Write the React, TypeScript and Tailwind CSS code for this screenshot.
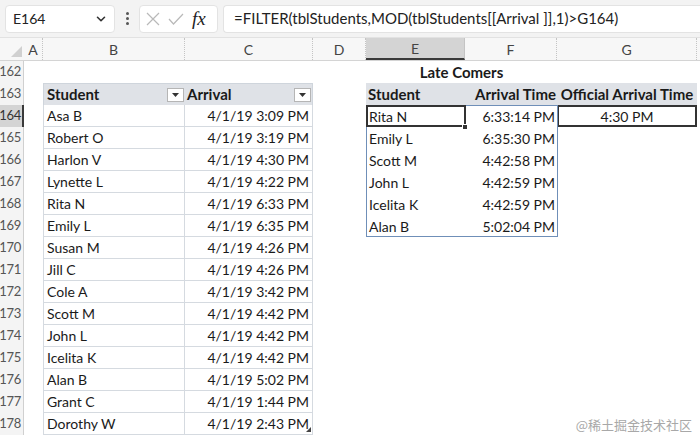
import React from "react";
import { ChevronDown } from "lucide-react";

const COLS = [
  { k: "A", w: 19 },
  { k: "B", w: 142 },
  { k: "C", w: 128 },
  { k: "D", w: 53 },
  { k: "E", w: 99 },
  { k: "F", w: 92 },
  { k: "G", w: 140 },
];

const students: [string, string][] = [
  ["Asa B", "4/1/19 3:09 PM"],
  ["Robert O", "4/1/19 3:19 PM"],
  ["Harlon V", "4/1/19 4:30 PM"],
  ["Lynette L", "4/1/19 4:22 PM"],
  ["Rita N", "4/1/19 6:33 PM"],
  ["Emily L", "4/1/19 6:35 PM"],
  ["Susan M", "4/1/19 4:26 PM"],
  ["Jill C", "4/1/19 4:26 PM"],
  ["Cole A", "4/1/19 3:42 PM"],
  ["Scott M", "4/1/19 4:42 PM"],
  ["John L", "4/1/19 4:42 PM"],
  ["Icelita K", "4/1/19 4:42 PM"],
  ["Alan B", "4/1/19 5:02 PM"],
  ["Grant C", "4/1/19 1:44 PM"],
  ["Dorothy W", "4/1/19 2:43 PM"],
];

const late: [string, string][] = [
  ["Rita N", "6:33:14 PM"],
  ["Emily L", "6:35:30 PM"],
  ["Scott M", "4:42:58 PM"],
  ["John L", "4:42:59 PM"],
  ["Icelita K", "4:42:59 PM"],
  ["Alan B", "5:02:04 PM"],
];

function FilterBtn() {
  return (
    <div className="w-[17px] h-[14px] bg-white border border-[#b5b5b5] flex items-center justify-center">
      <svg width="7" height="4" viewBox="0 0 7 4">
        <path d="M0 0 L7 0 L3.5 4 Z" fill="#333" />
      </svg>
    </div>
  );
}

function RowHeader({ n }: { n: number }) {
  const sel = n === 164;
  return (
    <div
      className={
        sel
          ? "w-[24px] shrink-0 h-full bg-[#d4d4d4] border-r-2 border-[#3a3a3a] text-[13px] text-[#333] flex items-center justify-end pr-[1px] tracking-[-0.3px]"
          : "w-[24px] shrink-0 h-full bg-[#f4f4f4] border-r border-[#d0d0d0] text-[13px] text-[#555] flex items-center justify-end pr-[2px] tracking-[-0.3px]"
      }
    >
      {n}
    </div>
  );
}

function Row({ n }: { n: number }) {
  const si = n - 164;
  const stu = si >= 0 && si < students.length ? students[si] : null;
  const li = n - 164;
  const lt = li >= 0 && li < late.length ? late[li] : null;
  return (
    <div className="flex h-[22px]">
      <RowHeader n={n} />
      {/* A */}
      <div className="w-[19px] shrink-0" />
      {/* B & C */}
      {n === 163 ? (
        <>
          <div className="w-[142px] shrink-0 bg-[#dfe2e7] border-l border-t border-[#cfd5dc] flex items-center justify-between pl-[3px] pr-[1px] font-bold text-[15px]">
            <span>Student</span>
            <FilterBtn />
          </div>
          <div className="w-[128px] shrink-0 bg-[#dfe2e7] border-r border-t border-[#cfd5dc] flex items-center justify-between pl-[2px] pr-[1px] font-bold text-[15px]">
            <span>Arrival</span>
            <FilterBtn />
          </div>
        </>
      ) : stu ? (
        <>
          <div className="w-[142px] shrink-0 border-l border-b border-r border-[#d5dae0] flex items-center pl-[3px]">
            {stu[0]}
          </div>
          <div className="w-[128px] shrink-0 border-r border-b border-[#d5dae0] flex items-center justify-end pr-[3px] relative">
            {stu[1]}
            {n === 178 && (
              <svg className="absolute right-[1px] bottom-[2px]" width="5" height="5" viewBox="0 0 5 5">
                <path d="M5 0 L5 5 L0 5 Z" fill="#444" />
              </svg>
            )}
          </div>
        </>
      ) : (
        <div className="w-[270px] shrink-0" />
      )}
      {/* D */}
      <div className="w-[53px] shrink-0" />
      {/* E F G */}
      {n === 162 ? (
        <div className="w-[191px] shrink-0 flex items-center justify-center font-bold text-[15px]">Late Comers</div>
      ) : n === 163 ? (
        <div className="w-[331px] shrink-0 bg-[#dfe2e7] flex items-center font-bold text-[15px]">
          <div className="w-[99px] pl-[2px]">Student</div>
          <div className="w-[92px] text-right pr-[1px] whitespace-nowrap">Arrival Time</div>
          <div className="w-[140px] text-center whitespace-nowrap">Official Arrival Time</div>
        </div>
      ) : lt ? (
        <>
          <div className="w-[99px] shrink-0 flex items-center pl-[3px]">{lt[0]}</div>
          <div className="w-[92px] shrink-0 flex items-center justify-end pr-[2px]">{lt[1]}</div>
          {n === 164 ? (
            <div className="w-[140px] shrink-0 border-2 border-[#333] flex items-center justify-center">4:30 PM</div>
          ) : (
            <div className="w-[140px] shrink-0" />
          )}
        </>
      ) : null}
    </div>
  );
}

export default function App() {
  const rows: number[] = [];
  for (let i = 162; i <= 178; i++) rows.push(i);
  return (
    <div
      className="w-[700px] h-[440px] bg-white overflow-hidden relative text-[#1a1a1a]"
      style={{ fontFamily: "Lato, 'Noto Sans', sans-serif" }}
    >
      {/* Formula bar */}
      <div className="h-[38px] bg-[#f3f3f3] border-b border-[#e2e2e2] flex items-center pl-[5px]">
        <div className="w-[110px] h-[28px] bg-white rounded-[4px] border border-[#e3e3e3] flex items-center justify-between pl-[7px] pr-[6px] text-[14px] text-[#222]">
          <span>E164</span>
          <ChevronDown size={14} strokeWidth={2.75} color="#333" />
        </div>
        <div className="w-[24px] flex flex-col items-center justify-center gap-[2px]">
          <div className="w-[3px] h-[3px] rounded-full bg-[#555]" />
          <div className="w-[3px] h-[3px] rounded-full bg-[#555]" />
          <div className="w-[3px] h-[3px] rounded-full bg-[#555]" />
        </div>
        <div className="w-[79px] h-[28px] bg-white rounded-[4px] border border-[#e3e3e3] flex items-center pl-[6px] gap-[8px]">
          <svg width="14" height="14" viewBox="0 0 14 14">
            <path d="M1 1 L13 13 M13 1 L1 13" stroke="#b9b9b9" strokeWidth="1.2" fill="none" />
          </svg>
          <svg width="16" height="12" viewBox="0 0 16 12">
            <path d="M1 6 L5.5 11 L15 1" stroke="#b9b9b9" strokeWidth="1.2" fill="none" />
          </svg>
          <span
            className="text-[19px] italic text-[#222] leading-none"
            style={{ fontFamily: "'Liberation Serif', serif" }}
          >
            fx
          </span>
        </div>
        <div className="flex-1 h-[28px] ml-[5px] bg-white rounded-l-[4px] border border-r-0 border-[#e3e3e3] flex items-center pl-[10px] text-[15px] text-[#222] whitespace-nowrap">
          =FILTER(tblStudents,MOD(tblStudents[[Arrival ]],1)&gt;G164)
        </div>
      </div>

      {/* Column headers */}
      <div className="flex h-[23px] bg-[#f7f7f7] border-b border-[#d4d4d4] text-[14px] text-[#444]">
        <div className="w-[24px] shrink-0 flex items-end justify-end pr-[2px] pb-[3px]">
          <svg width="11" height="11" viewBox="0 0 11 11">
            <path d="M11 0 L11 11 L0 11 Z" fill="#d0d0d0" />
          </svg>
        </div>
        {COLS.map((c) =>
          c.k === "E" ? (
            <div
              key={c.k}
              style={{ width: c.w }}
              className="shrink-0 flex items-center justify-center bg-[#d4d4d4] border-b-2 border-[#3a3a3a] border-r border-r-[#c4c4c4]"
            >
              {c.k}
            </div>
          ) : (
            <div
              key={c.k}
              style={{ width: c.w }}
              className="shrink-0 flex items-center justify-center border-r border-dotted border-[#c4c4c4]"
            >
              {c.k}
            </div>
          )
        )}
        <div className="flex-1" />
      </div>

      {/* Grid */}
      <div className="relative text-[14px] text-[#1a1a1a]">
        {rows.map((n) => (
          <Row key={n} n={n} />
        ))}
        {/* spill range border */}
        <div className="absolute left-[366px] top-[44px] w-[192px] h-[132px] border border-[#6f8fb8] pointer-events-none" />
        {/* active cell */}
        <div className="absolute left-[366px] top-[44px] w-[100px] h-[22px] border-2 border-[#333] pointer-events-none" />
        <div className="absolute left-[462px] top-[63px] w-[6px] h-[6px] bg-[#333] border border-white pointer-events-none" />
      </div>

      {/* watermark */}
      <div
        className="absolute right-[8px] bottom-[6px] text-[13px] text-[#a8a8a8]"
        style={{ fontFamily: "'Noto Sans CJK SC', sans-serif" }}
      >
        @稀土掘金技术社区
      </div>
    </div>
  );
}
